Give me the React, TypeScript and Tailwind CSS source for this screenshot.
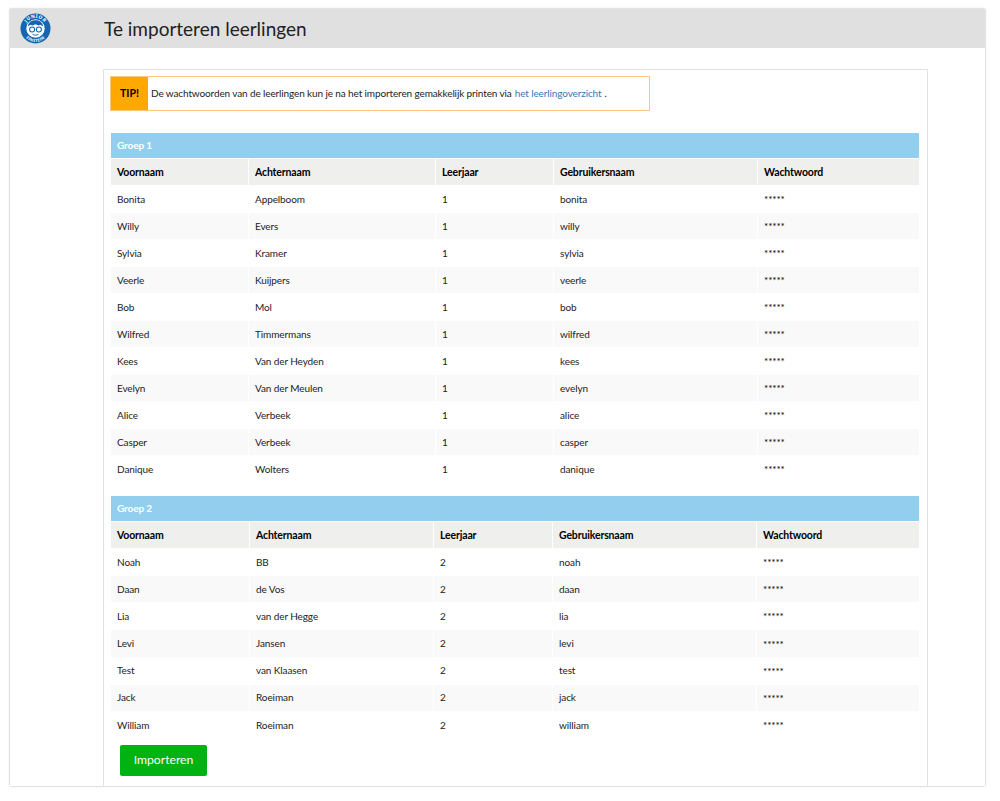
const groep1 = [
  ['Bonita', 'Appelboom', '1', 'bonita'],
  ['Willy', 'Evers', '1', 'willy'],
  ['Sylvia', 'Kramer', '1', 'sylvia'],
  ['Veerle', 'Kuijpers', '1', 'veerle'],
  ['Bob', 'Mol', '1', 'bob'],
  ['Wilfred', 'Timmermans', '1', 'wilfred'],
  ['Kees', 'Van der Heyden', '1', 'kees'],
  ['Evelyn', 'Van der Meulen', '1', 'evelyn'],
  ['Alice', 'Verbeek', '1', 'alice'],
  ['Casper', 'Verbeek', '1', 'casper'],
  ['Danique', 'Wolters', '1', 'danique'],
]

const groep2 = [
  ['Noah', 'BB', '2', 'noah'],
  ['Daan', 'de Vos', '2', 'daan'],
  ['Lia', 'van der Hegge', '2', 'lia'],
  ['Levi', 'Jansen', '2', 'levi'],
  ['Test', 'van Klaasen', '2', 'test'],
  ['Jack', 'Roeiman', '2', 'jack'],
  ['William', 'Roeiman', '2', 'william'],
]

function Logo() {
  return (
    <svg viewBox="0 0 32 32" className="h-[31px] w-[31px]">
      <defs>
        <path id="top-arc" d="M5 16a11 11 0 0 1 22 0" />
        <path id="bottom-arc" d="M3.2 17a12.8 12.8 0 0 0 25.6 0" />
      </defs>
      <circle cx="16" cy="16" r="15.5" fill="#1565b0" />
      <circle cx="16" cy="16" r="9.5" fill="#fff" />
      <text fontSize="5" fontWeight="700" fill="#fff" fontFamily="Noto Sans, sans-serif" letterSpacing="0.5">
        <textPath href="#top-arc" startOffset="50%" textAnchor="middle">JUNIOR</textPath>
      </text>
      <text fontSize="4" fontWeight="700" fill="#fff" fontFamily="Noto Sans, sans-serif" letterSpacing="0.4">
        <textPath href="#bottom-arc" startOffset="50%" textAnchor="middle">EINSTEIN</textPath>
      </text>
      <path d="M8 14c1-5 4-6.500 8-6.500s7 1.500 8 6.500l-3-2-2 1-3-1.500-3 1.500-2-1z" fill="#1565b0" />
      <circle cx="12.500" cy="17" r="2.600" fill="none" stroke="#1565b0" strokeWidth="1.100" />
      <circle cx="19.500" cy="17" r="2.600" fill="none" stroke="#1565b0" strokeWidth="1.100" />
      <path d="M13 22c2 1.200 4 1.200 6 0" fill="none" stroke="#1565b0" strokeWidth="1" />
    </svg>
  )
}

function Groep({ titel, rijen, kolommen, rijHoogte }: { titel: string; rijen: string[][]; kolommen: string[]; rijHoogte: string }) {
  return (
    <table className="w-[809px] table-fixed border-separate border-spacing-x-[1px] border-spacing-y-[1px] text-[10px] tracking-[-0.1px] text-[#222]">
      <colgroup>
        {kolommen.map((w) => (
          <col key={w} style={{ width: w }} />
        ))}
      </colgroup>
      <thead>
        <tr>
          <th colSpan={5} className="h-[25px] bg-[#93ceee] px-[6px] text-left text-[10px] font-bold text-white">
            {titel}
          </th>
        </tr>
        <tr>
          {['Voornaam', 'Achternaam', 'Leerjaar', 'Gebruikersnaam', 'Wachtwoord'].map((k) => (
            <th key={k} className="h-[26px] bg-[#efefee] px-[6px] pt-[2px] text-left text-[10.5px] font-bold tracking-[-0.15px] text-black">
              {k}
            </th>
          ))}
        </tr>
      </thead>
      <tbody>
        {rijen.map((r, i) => (
          <tr key={r[3]}>
            {r.map((c, j) => (
              <td key={j} className={`${rijHoogte} px-[6px] ${i % 2 ? 'bg-[#f9f9f9]' : 'bg-white'}`}>
                {c}
              </td>
            ))}
            <td className={`${rijHoogte} px-[6px] pt-[1px] text-black ${i % 2 ? 'bg-[#f9f9f9]' : 'bg-white'}`}>*****</td>
          </tr>
        ))}
      </tbody>
    </table>
  )
}

export default function App() {
  return (
    <div className="h-[801px] overflow-hidden bg-white pl-[10px] pr-[15px] pt-[9px] [font-family:Lato,sans-serif]">
      <div className="h-[777px] overflow-hidden bg-white shadow-[0_0_2px_rgba(0,0,0,0.35)]">
        <div className="flex h-[39px] items-center bg-[#e0e0e0]">
          <div className="ml-[10px] w-[84px]">
            <Logo />
          </div>
          <h1 className="pt-[2px] text-[19px] text-[#222]">Te importeren leerlingen</h1>
        </div>
        <div className="ml-[93px] mr-[57px] mt-[21px] h-[730px] border border-[#e2e2e2] pl-[6px] pt-[6px]">
          <div className="flex h-[35px] w-[540px] border border-[#fdc97e]">
            <div className="flex w-[37px] shrink-0 items-center justify-center bg-[#ffa800] text-[10.500px] font-bold text-black">
              TIP!
            </div>
            <p className="flex items-center whitespace-nowrap pl-[3px] text-[10px] tracking-[-0.12px] text-[#222]">
              De wachtwoorden van de leerlingen kun je na het importeren gemakkelijk printen via
              <a className="mx-[3px] text-[#337ab7]">het leerlingoverzicht</a> .
            </p>
          </div>
          <div className="mt-[21px]">
            <Groep titel="Groep 1" rijen={groep1} kolommen={['137px', '186px', '117px', '203px', '161px']} rijHoogte="h-[26px]" />
          </div>
          <div className="mt-[12px]">
            <Groep titel="Groep 2" rijen={groep2} kolommen={['138px', '183px', '118px', '203px', '162px']} rijHoogte="h-[26.170px]" />
          </div>
          <button className="ml-[10px] mt-[6px] h-[31px] w-[87px] rounded-[2px] bg-[#00b212] text-[12.200px] text-white">
            Importeren
          </button>
        </div>
      </div>
    </div>
  )
}
